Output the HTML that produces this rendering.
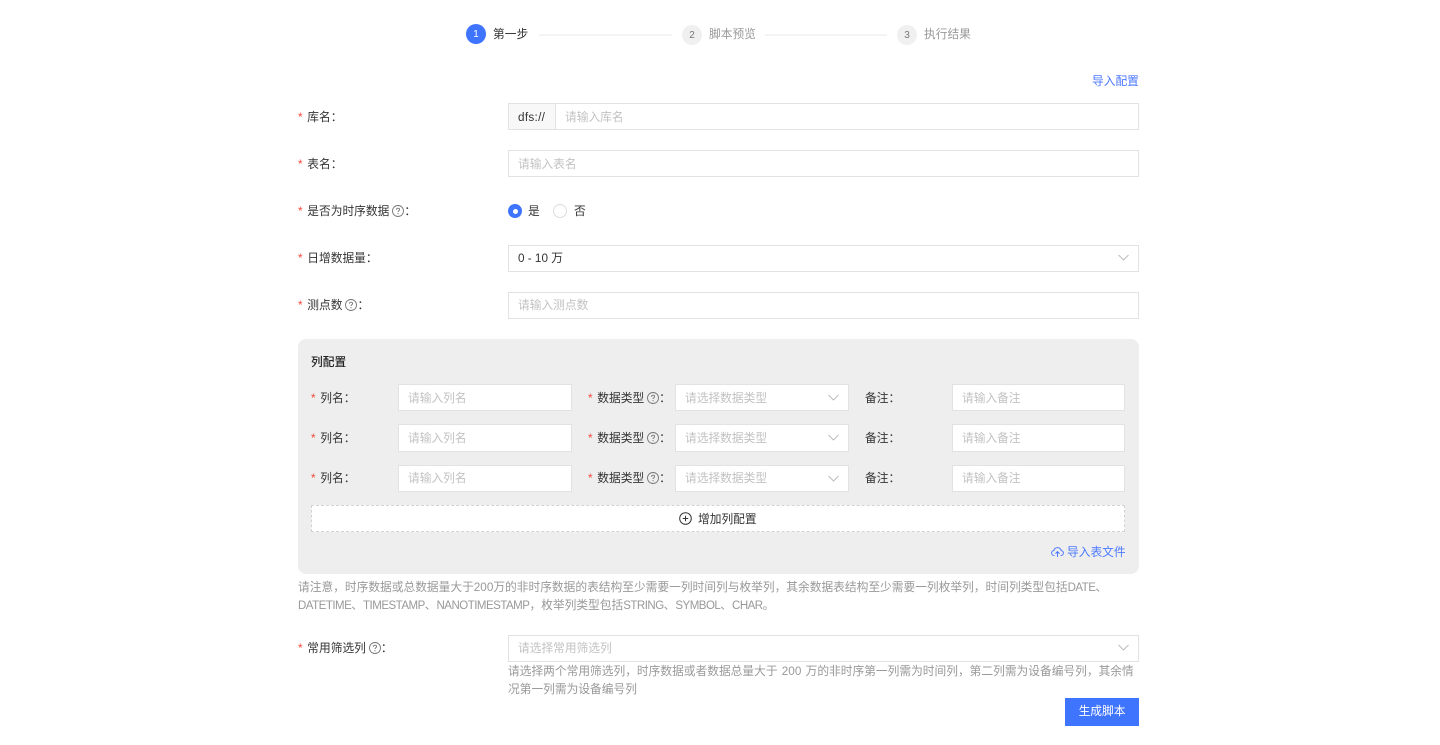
<!DOCTYPE html>
<html lang="zh-CN">
<head>
<meta charset="utf-8">
<title>第一步</title>
<style>
html,body{margin:0;padding:0;background:#fff;}
body{width:1440px;height:745px;position:relative;overflow:hidden;font-family:"Liberation Sans","Noto Sans CJK SC",sans-serif;font-size:11.72px;color:#333;}
.t,.b,.c,svg{position:absolute;}
.t{white-space:nowrap;line-height:18px;height:18px;margin-top:1px;}
.b{box-sizing:border-box;border:1px solid #e2e2e2;background:#fff;}
.ph{color:#c2c2c2;}
.r{color:#f5483b;display:inline-block;width:9.3px;}
.c{box-sizing:border-box;border-radius:50%;text-align:center;width:20px;height:20px;line-height:21px;font-size:10px;background:#f0f0f0;color:#777;}
.q{display:inline-block;vertical-align:-2px;margin-left:3px;}
.gr{color:#999;}
.bl{color:#4b78ff;}
.line{position:absolute;height:2px;background:#f4f4f4;top:34px;}
.l{font-size:11.5px;letter-spacing:-.5px;}
</style>
</head>
<body>
<svg width="0" height="0" style="position:absolute"><defs>
<symbol id="q" viewBox="0 0 12 12"><circle cx="6" cy="6" r="5.500" fill="none" stroke="#777" stroke-width=".9"/><path d="M4.400 4.700C4.400 3.800 5.100 3.200 6 3.200S7.600 3.800 7.600 4.600C7.600 5.700 6 5.800 6 7" fill="none" stroke="#777" stroke-width=".9"/><circle cx="6" cy="8.700" r=".6" fill="#777"/></symbol>
<symbol id="d" viewBox="0 0 12 7"><path d="M.5.7 6 6.200 11.500.7" fill="none" stroke="#b5b5b5" stroke-width="1"/></symbol>
</defs></svg>

<div class="c" style="left:466px;top:24px;background:#3f74ff;color:#fff;">1</div>
<div class="t" style="left:493px;top:25px;">第一步</div>
<div class="line" style="left:539px;width:133px;"></div>
<div class="c" style="left:682px;top:25px;">2</div>
<div class="t gr" style="left:709px;top:25px;">脚本预览</div>
<div class="line" style="left:765px;width:122px;"></div>
<div class="c" style="left:897px;top:25px;">3</div>
<div class="t gr" style="left:924px;top:25px;">执行结果</div>

<div class="t bl" style="left:1092px;top:72px;">导入配置</div>

<div class="t" style="left:298px;top:108px;"><span class="r">*</span>库名：</div>
<div class="b" style="left:508px;top:103px;width:48px;height:27px;background:#f8f8f8;"></div>
<div class="t" style="left:518px;top:108px;letter-spacing:.3px;">dfs://</div>
<div class="b" style="left:555px;top:103px;width:584px;height:27px;"></div>
<div class="t ph" style="left:565px;top:108px;">请输入库名</div>

<div class="t" style="left:298px;top:155px;"><span class="r">*</span>表名：</div>
<div class="b" style="left:508px;top:150px;width:631px;height:27px;"></div>
<div class="t ph" style="left:518px;top:155px;">请输入表名</div>

<div class="t" style="left:298px;top:202px;"><span class="r">*</span>是否为时序数据<svg class="q" style="position:static" width="12" height="12"><use href="#q"/></svg>：</div>
<div class="c" style="left:508px;top:204px;width:14px;height:14px;background:#3f74ff;"></div>
<div class="c" style="left:512.500px;top:208.500px;width:5px;height:5px;background:#fff;"></div>
<div class="t" style="left:528px;top:202px;">是</div>
<div class="c" style="left:553px;top:204px;width:14px;height:14px;background:#fff;border:1px solid #dcdcdc;"></div>
<div class="t" style="left:574px;top:202px;">否</div>

<div class="t" style="left:298px;top:249px;"><span class="r">*</span>日增数据量：</div>
<div class="b" style="left:508px;top:245px;width:631px;height:27px;"></div>
<div class="t" style="left:518px;top:249px;">0 - 10 万</div>
<svg style="left:1118px;top:254px" width="11" height="7"><use href="#d"/></svg>

<div class="t" style="left:298px;top:296px;"><span class="r">*</span>测点数<svg class="q" style="position:static" width="12" height="12"><use href="#q"/></svg>：</div>
<div class="b" style="left:508px;top:291.500px;width:631px;height:27px;"></div>
<div class="t ph" style="left:518px;top:296px;">请输入测点数</div>

<div style="position:absolute;left:298px;top:339px;width:841px;height:235px;background:#eee;border-radius:8px;"></div>
<div class="t" style="left:311px;top:353px;color:#222;font-weight:500;">列配置</div>

<div class="t" style="left:311px;top:389px;"><span class="r">*</span>列名：</div>
<div class="b" style="left:398px;top:384px;width:174px;height:27px;"></div>
<div class="t ph" style="left:408px;top:389px;">请输入列名</div>
<div class="t" style="left:588px;top:389px;"><span class="r">*</span>数据类型<svg class="q" style="position:static" width="12" height="12"><use href="#q"/></svg>：</div>
<div class="b" style="left:675px;top:384px;width:174px;height:27px;"></div>
<div class="t ph" style="left:685px;top:389px;">请选择数据类型</div>
<svg style="left:828px;top:394px" width="11" height="7"><use href="#d"/></svg>
<div class="t" style="left:865px;top:389px;">备注：</div>
<div class="b" style="left:952px;top:384px;width:173px;height:27px;"></div>
<div class="t ph" style="left:962px;top:389px;">请输入备注</div>

<div class="t" style="left:311px;top:429px;"><span class="r">*</span>列名：</div>
<div class="b" style="left:398px;top:424px;width:174px;height:28px;"></div>
<div class="t ph" style="left:408px;top:429px;">请输入列名</div>
<div class="t" style="left:588px;top:429px;"><span class="r">*</span>数据类型<svg class="q" style="position:static" width="12" height="12"><use href="#q"/></svg>：</div>
<div class="b" style="left:675px;top:424px;width:174px;height:28px;"></div>
<div class="t ph" style="left:685px;top:429px;">请选择数据类型</div>
<svg style="left:828px;top:434px" width="11" height="7"><use href="#d"/></svg>
<div class="t" style="left:865px;top:429px;">备注：</div>
<div class="b" style="left:952px;top:424px;width:173px;height:28px;"></div>
<div class="t ph" style="left:962px;top:429px;">请输入备注</div>

<div class="t" style="left:311px;top:469px;"><span class="r">*</span>列名：</div>
<div class="b" style="left:398px;top:465px;width:174px;height:27px;"></div>
<div class="t ph" style="left:408px;top:469px;">请输入列名</div>
<div class="t" style="left:588px;top:469px;"><span class="r">*</span>数据类型<svg class="q" style="position:static" width="12" height="12"><use href="#q"/></svg>：</div>
<div class="b" style="left:675px;top:465px;width:174px;height:27px;"></div>
<div class="t ph" style="left:685px;top:469px;">请选择数据类型</div>
<svg style="left:828px;top:475px" width="11" height="7"><use href="#d"/></svg>
<div class="t" style="left:865px;top:469px;">备注：</div>
<div class="b" style="left:952px;top:465px;width:173px;height:27px;"></div>
<div class="t ph" style="left:962px;top:469px;">请输入备注</div>

<div class="b" style="left:311px;top:505px;width:814px;height:27px;border:1px dashed #d2d2d2;"></div>
<svg style="left:679px;top:512px" width="13" height="13" viewBox="0 0 13 13"><circle cx="6.500" cy="6.500" r="5.800" fill="none" stroke="#333" stroke-width="1"/><path d="M3.800 6.500H9.200M6.500 3.800V9.200" stroke="#333" stroke-width="1"/></svg>
<div class="t" style="left:698px;top:510px;">增加列配置</div>

<svg style="left:1051px;top:546px" width="13" height="12" viewBox="0 0 13 12"><path d="M3.500 9.500H3.200C1.700 9.500.6 8.400.6 7 .6 5.700 1.600 4.700 2.800 4.600 3.200 2.800 4.700 1.600 6.500 1.600S9.800 2.800 10.200 4.600C11.400 4.700 12.400 5.700 12.400 7 12.400 8.400 11.300 9.500 9.800 9.500H9.500M6.500 11V5.800M4.500 7.600 6.500 5.600 8.500 7.600" fill="none" stroke="#4b78ff" stroke-width="1"/></svg>
<div class="t bl" style="left:1067px;top:543px;">导入表文件</div>

<div class="t gr" style="left:298px;top:578px;">请注意，时序数据或总数据量大于200万的非时序数据的表结构至少需要一列时间列与枚举列，其余数据表结构至少需要一列枚举列，时间列类型包括<span class="l">DATE</span>、</div>
<div class="t gr" style="left:298px;top:596px;"><span class="l">DATETIME</span>、<span class="l">TIMESTAMP</span>、<span class="l">NANOTIMESTAMP</span>，枚举列类型包括<span class="l">STRING</span>、<span class="l">SYMBOL</span>、<span class="l">CHAR</span>。</div>

<div class="t" style="left:298px;top:639px;"><span class="r">*</span>常用筛选列<svg class="q" style="position:static" width="12" height="12"><use href="#q"/></svg>：</div>
<div class="b" style="left:508px;top:635px;width:631px;height:27px;"></div>
<div class="t ph" style="left:518px;top:639px;">请选择常用筛选列</div>
<svg style="left:1118px;top:644px" width="11" height="7"><use href="#d"/></svg>
<div class="t gr" style="left:508px;top:662px;word-spacing:1px;">请选择两个常用筛选列，时序数据或者数据总量大于 200 万的非时序第一列需为时间列，第二列需为设备编号列，其余情</div>
<div class="t gr" style="left:508px;top:680px;">况第一列需为设备编号列</div>

<div style="position:absolute;left:1065px;top:698px;width:74px;height:28px;background:#3f74ff;color:#fff;text-align:center;line-height:28px;">生成脚本</div>
</body>
</html>
